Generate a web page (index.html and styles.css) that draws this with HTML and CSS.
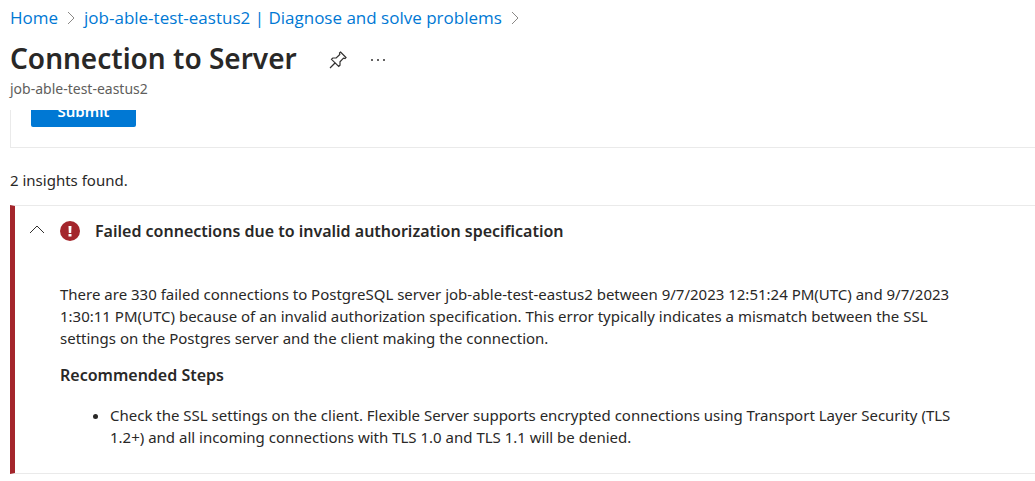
FILE: index.html
```html
<!DOCTYPE html>
<html lang="en">
    <head>
        <meta charset="utf-8">
        <title>Connection to Server</title>
        <link rel="stylesheet" href="styles.css">
    </head>
    <body>
        <header class="header">
            <nav class="breadcrumb">
                <a href="#">Home</a>
                <svg class="separator" viewBox="0 0 8 14"><path d="M1 1l6 6-6 6"/></svg>
                <a href="#">job-able-test-eastus2 | Diagnose and solve problems</a>
                <svg class="separator" viewBox="0 0 8 14"><path d="M1 1l6 6-6 6"/></svg>
            </nav>
            <div class="title-row">
                <h1>Connection to Server</h1>
                <div class="title-actions">
                    <button class="icon-button" aria-label="Pin">
                        <svg class="pin" viewBox="0 0 18 18"><path d="M1 17l5.500-5.500M11.500 1l5.500 5.500-1 1-1.500-.3-3.500 3.600v3.400L9.700 15.500 2.500 8.300l1.300-1.300h3.400L10.800 3.500 10.500 2z"/></svg>
                    </button>
                    <button class="icon-button" aria-label="More">
                        <svg class="more" viewBox="0 0 14 2"><circle cx="1" cy="1" r="1"/><circle cx="7" cy="1" r="1"/><circle cx="13" cy="1" r="1"/></svg>
                    </button>
                </div>
            </div>
            <div class="subtitle">job-able-test-eastus2</div>
        </header>

        <main class="content">
            <div class="form-panel">
                <button class="submit">Submit</button>
            </div>

            <p class="count">2 insights found.</p>

            <section class="insight">
                <div class="insight-header">
                    <button class="icon-button" aria-label="Collapse">
                        <svg class="chevron" viewBox="0 0 16 13"><path d="M1 8l7-7 7 7"/></svg>
                    </button>
                    <svg class="critical" viewBox="0 0 20 20">
                        <circle cx="10" cy="10" r="10"/>
                        <path class="mark" d="M8.500 5h3l-.3 7H8.800zM8.500 13h3v2.500h-3z"/>
                    </svg>
                    <h2>Failed connections due to invalid authorization specification</h2>
                </div>
                <div class="insight-body">
                    <p>There are 330 failed connections to PostgreSQL server job-able-test-eastus2 between 9/7/2023 12:51:24 PM(UTC) and 9/7/2023 1:30:11 PM(UTC) because of an invalid authorization specification. This error typically indicates a mismatch between the SSL settings on the Postgres server and the client making the connection.</p>
                    <h3>Recommended Steps</h3>
                    <ul>
                        <li>Check the SSL settings on the client. Flexible Server supports encrypted connections using Transport Layer Security (TLS 1.2+) and all incoming connections with TLS 1.0 and TLS 1.1 will be denied.</li>
                    </ul>
                </div>
            </section>
        </main>
    </body>
</html>
```
FILE: styles.css
```css
body {
    margin: 0;
    font-family: "Noto Sans", "Open Sans", sans-serif;
    font-size: 15px;
    line-height: 22px;
    color: #292827;
    background: #fff;
}

h1, h2, h3, p, ul {
    margin: 0;
}

svg {
    display: block;
    fill: none;
    stroke: #323130;
}

.header {
    padding: 6px 10px 10px;
}

.breadcrumb {
    display: flex;
    align-items: center;
    gap: 9px;
    font-family: "Open Sans", "Noto Sans", sans-serif;
    font-size: 17px;
    line-height: 24px;
}

.breadcrumb a {
    color: #0078d4;
    text-decoration: none;
}

.separator {
    width: 8px;
    height: 14px;
    stroke: #8a8886;
}

.title-row {
    display: flex;
    align-items: center;
    gap: 32px;
    height: 40px;
    padding-top: 8px;
}

.title-actions {
    display: flex;
    align-items: center;
    gap: 24px;
    padding-top: 4px;
}

h1 {
    font-size: 28px;
    font-weight: 600;
    line-height: 40px;
}

.icon-button {
    padding: 0;
    border: none;
    background: none;
    cursor: pointer;
}

.pin {
    width: 18px;
    height: 18px;
    stroke-width: 1.2;
}

.more {
    width: 14px;
    height: 2px;
    fill: #323130;
    stroke: none;
}

.subtitle {
    font-size: 14px;
    color: #605e5c;
}

.content {
    padding-left: 10px;
}

.form-panel {
    display: flex;
    align-items: flex-end;
    height: 17px;
    padding: 0 20px 20px;
    overflow: hidden;
    border-left: 1px solid #eaeaea;
    border-bottom: 1px solid #eaeaea;
}

.submit {
    width: 105px;
    height: 32px;
    flex-shrink: 0;
    border: none;
    border-radius: 2px;
    background: #0078d4;
    color: #fff;
    font-family: inherit;
    font-size: 15px;
    font-weight: 600;
    cursor: pointer;
}

.count {
    padding: 21px 0 14px;
}

.insight {
    border: 1px solid #eaeaea;
    border-left: 5px solid #a4262c;
    border-right: none;
}

.insight-header {
    display: flex;
    align-items: center;
    gap: 15px;
    padding: 14px;
}

.chevron {
    width: 16px;
    height: 13px;
}

.critical {
    width: 20px;
    height: 20px;
    fill: #a4262c;
    stroke: none;
}

.critical .mark {
    fill: #fff;
}

h2, h3 {
    font-size: 16px;
    font-weight: 600;
    line-height: 22px;
}

.insight-body {
    padding: 27px 60px 25px 45px;
}

h3 {
    padding: 15px 0 18px;
}

ul {
    padding-left: 50px;
}
```
